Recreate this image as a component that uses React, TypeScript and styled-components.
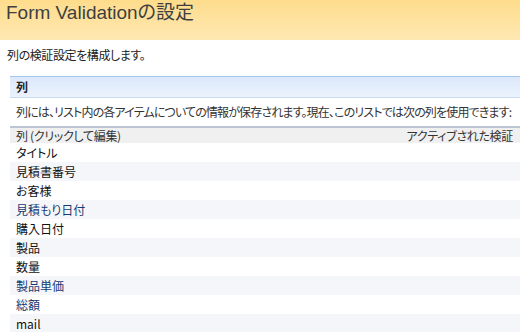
import styled, { createGlobalStyle } from 'styled-components';

const GlobalStyle = createGlobalStyle`
  html, body { margin: 0; padding: 0; background: #fff; }
  body {
    width: 520px;
    height: 332px;
    overflow: hidden;
    font-family: "Noto Sans CJK JP", "Liberation Sans", sans-serif;
    font-size: 12px;
    font-feature-settings: "palt";
    color: #222;
  }
`;

const columns = [
  { name: 'タイトル', link: false },
  { name: '見積書番号', link: false },
  { name: 'お客様', link: false },
  { name: '見積もり日付', link: true },
  { name: '購入日付', link: false },
  { name: '製品', link: false },
  { name: '数量', link: false },
  { name: '製品単価', link: true },
  { name: '総額', link: true },
  { name: 'mail', link: false },
];

const App = () => {
  return (
    <Page>
      <GlobalStyle />
      <TitleBar>
        <Title>Form Validationの設定</Title>
      </TitleBar>
      <Intro>列の検証設定を構成します。</Intro>
      <Section>
        <SectionHead>列</SectionHead>
        <SectionText>
          列には、リスト内の各アイテムについての情報が保存されます。現在、このリストでは次の列を使用できます:
        </SectionText>
        <Table>
          <HeadRow>
            <span>列 (クリックして編集)</span>
            <span>アクティブされた検証</span>
          </HeadRow>
          {columns.map((col, i) => (
            <Row key={col.name} $alt={i % 2 === 1}>
              <ColName $link={col.link}>{col.name}</ColName>
            </Row>
          ))}
        </Table>
      </Section>
    </Page>
  );
};

export default App;

const Page = styled.div`
  display: flex;
  flex-direction: column;
  width: 520px;
`;

const TitleBar = styled.div`
  height: 40px;
  background: linear-gradient(to bottom, #fedc8c 0%, #fee8b2 100%);
  display: flex;
  align-items: flex-start;
  padding: 0 0 0 6px;
  box-sizing: border-box;
`;

const Title = styled.h1`
  margin: 0;
  font-family: "Liberation Sans", "Noto Sans CJK JP", sans-serif;
  font-weight: normal;
  font-size: 19px;
  line-height: 25px;
  color: #3f3f3f;
`;

const Intro = styled.div`
  padding: 7px 0 0 7px;
  height: 30px;
  line-height: 16px;
  color: #222;
  letter-spacing: -0.4px;
  box-sizing: border-box;
`;

const Section = styled.div`
  margin: 6px 0 0 10px;
  display: flex;
  flex-direction: column;
`;

const SectionHead = styled.div`
  height: 22px;
  box-sizing: border-box;
  border-top: 1px solid #a9c6ee;
  border-bottom: 1px solid #c8dbf4;
  background: linear-gradient(to bottom, #dce9fb 0%, #ebf2fd 100%);
  padding-left: 6px;
  font-weight: bold;
  line-height: 20px;
  color: #222;
`;

const SectionText = styled.div`
  padding: 6px 0 0 6px;
  height: 28px;
  box-sizing: border-box;
  line-height: 16px;
  white-space: nowrap;
  letter-spacing: -0.85px;
  color: #333;
`;

const Table = styled.div`
  display: flex;
  flex-direction: column;
`;

const HeadRow = styled.div`
  height: 17px;
  box-sizing: border-box;
  border-top: 2px solid #bcc6d3;
  background: #f0f0f0;
  display: flex;
  justify-content: space-between;
  padding: 0 7px 0 6px;
  line-height: 15px;
  letter-spacing: -0.3px;
  color: #333;
`;

const Row = styled.div<{ $alt: boolean }>`
  height: 19px;
  display: flex;
  align-items: center;
  padding-left: 6px;
  background: ${(p) => (p.$alt ? '#f5f6f9' : '#fff')};
`;

const ColName = styled.span<{ $link: boolean }>`
  color: ${(p) => (p.$link ? '#153b73' : '#111')};
  font-size: 12px;
`;
